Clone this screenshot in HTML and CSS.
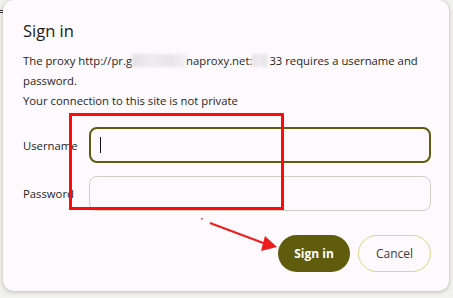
FILE: index.html
```html
<!DOCTYPE html>
<html>
<head>
<meta charset="utf-8">
<link rel="stylesheet" href="styles.css">
</head>
<body>
<div class="backdrop"><span class="menu-glyph">=</span></div>
<div class="dialog">
  <h1 class="title">Sign in</h1>
  <div class="message">
    <p class="line">The proxy http://pr.g<span class="blur blur-a"></span>naproxy.net:<span class="blur blur-b"></span>33 requires a username and password.</p>
    <p class="line">Your connection to this site is not private</p>
  </div>
  <div class="form">
    <label class="label">Username</label>
    <div class="input input-focus"><span class="caret"></span></div>
    <label class="label">Password</label>
    <div class="input"></div>
  </div>
  <div class="actions">
    <button class="btn btn-primary">Sign in</button>
    <button class="btn btn-secondary">Cancel</button>
  </div>
</div>
<div class="highlight-box"></div>
<svg class="arrow" width="453" height="298" viewBox="0 0 453 298">
  <rect x="201" y="218" width="1.5" height="1.5" fill="#ff1a1a"/>
  <line x1="210" y1="223" x2="266" y2="244" stroke="#ee1c1c" stroke-width="2"/>
  <polygon points="277,247 265,236 261,251" fill="#ee1c1c"/>
</svg>
</body>
</html>
```
FILE: styles.css
```css
html, body {
  margin: 0;
  padding: 0;
}
body {
  width: 453px;
  height: 298px;
  background: #ffffff;
  position: relative;
  overflow: hidden;
  font-family: "Open Sans", "Noto Sans", sans-serif;
  color: #1f1f1f;
}
.backdrop {
  position: absolute;
  left: 0;
  top: 0;
  width: 453px;
  height: 298px;
  background: #f1f1ee;
}
.menu-glyph {
  position: absolute;
  left: -3px;
  top: 4px;
  font-size: 12px;
  color: #333;
  font-family: "DejaVu Sans", sans-serif;
}
.dialog {
  position: relative;
  margin: 0 0 0 3px;
  width: 446px;
  height: 291px;
  box-sizing: border-box;
  padding: 20px 18px 0 20px;
  background: #fdf9fc;
  border-radius: 10px;
  box-shadow: 0 1px 4px rgba(0, 0, 0, 0.22), 0 0 1px rgba(0, 0, 0, 0.15);
}
.title {
  margin: 0;
  font-size: 16.5px;
  line-height: 22px;
  font-weight: 400;
  color: #1b1b1b;
}
.message {
  margin-top: 9px;
}
.line {
  margin: 0;
  font-size: 11.3px;
  line-height: 20px;
  color: #1f1f1f;
}
.blur {
  display: inline-block;
  height: 13px;
  vertical-align: -2px;
  background: linear-gradient(90deg, #e3e1e4, #eeecef 40%, #e6e4e7 70%, #f3f1f3);
  filter: blur(1.5px);
}
.blur-a {
  width: 54px;
}
.blur-b {
  width: 17px;
}
.form {
  margin-top: 16px;
  display: grid;
  grid-template-columns: 66px 1fr;
  row-gap: 13px;
  align-items: center;
}
.label {
  font-size: 11.3px;
  color: #1f1f1f;
}
.input {
  height: 35px;
  box-sizing: border-box;
  border: 1px solid #cfccc4;
  border-radius: 8px;
  background: #fdf9fc;
  position: relative;
}
.input-focus {
  height: 36px;
  border: 2px solid #5f5b10;
}
.caret {
  position: absolute;
  left: 9px;
  top: 8px;
  width: 1px;
  height: 16px;
  background: #111;
}
.actions {
  margin-top: 24px;
  display: flex;
  justify-content: flex-end;
  gap: 8px;
}
.btn {
  height: 37px;
  width: 72px;
  border-radius: 19px;
  font-family: "Open Sans", "Noto Sans", sans-serif;
  font-size: 12px;
  padding: 0;
  cursor: pointer;
}
.btn-primary {
  background: #605c0e;
  border: none;
  color: #ffffff;
  font-weight: 700;
}
.btn-secondary {
  width: 73px;
  background: #fdf9fc;
  border: 1px solid #d8d48e;
  color: #3a3c40;
  font-weight: 400;
}
.highlight-box {
  position: absolute;
  left: 69px;
  top: 113px;
  width: 215px;
  height: 97px;
  box-sizing: border-box;
  border: 3px solid #ff0a0a;
}
.arrow {
  position: absolute;
  left: 0;
  top: 0;
}
```
